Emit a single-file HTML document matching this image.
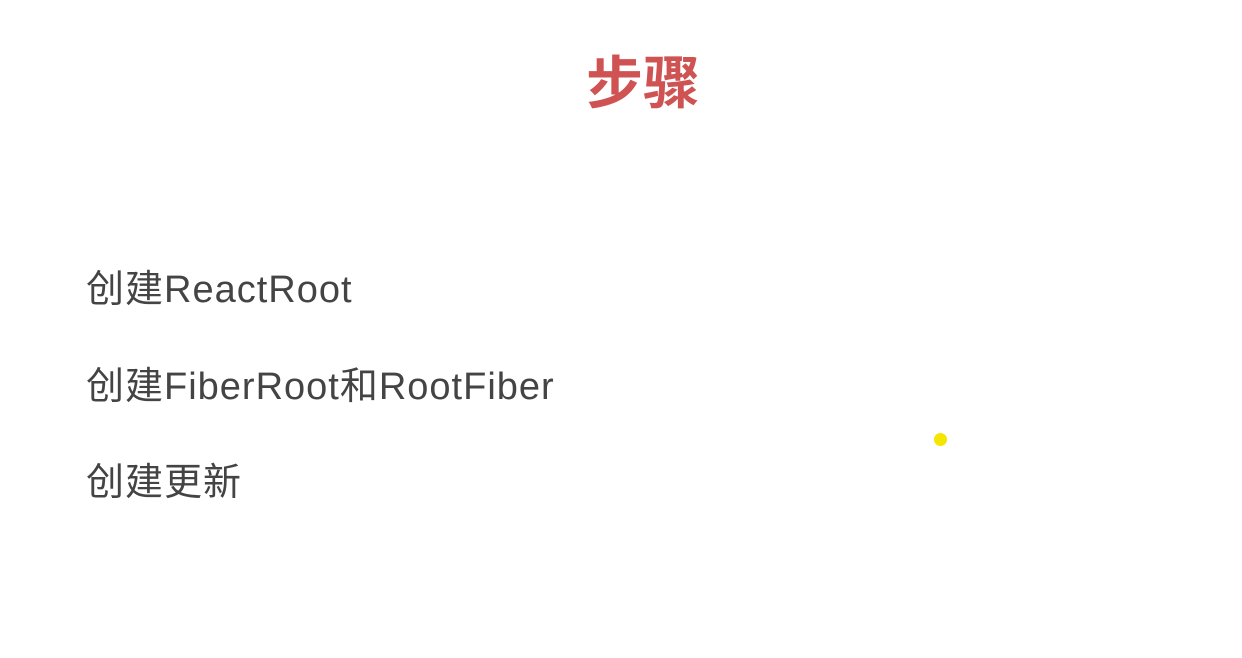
<!DOCTYPE html>
<html><head><meta charset="utf-8"><style>
body{margin:0;width:1242px;height:658px;background:#fff;position:relative;overflow:hidden;font-family:"Liberation Sans","Noto Sans CJK SC",sans-serif}
.t{position:absolute;left:0;width:1286px;text-align:center;top:48px;font-size:57px;font-weight:bold;color:#d05353;line-height:72px}
.l{position:absolute;left:86px;font-size:38px;color:#444;line-height:48px;letter-spacing:1px}
.d{position:absolute;left:934px;top:433px;width:13px;height:13px;border-radius:50%;background:#f5e500}
</style></head><body>
<div class="t">步骤</div>
<div class="l" style="top:266px">创建ReactRoot</div>
<div class="l" style="top:363px">创建FiberRoot和RootFiber</div>
<div class="l" style="top:459px">创建更新</div>
<div class="d"></div>
</body></html>
